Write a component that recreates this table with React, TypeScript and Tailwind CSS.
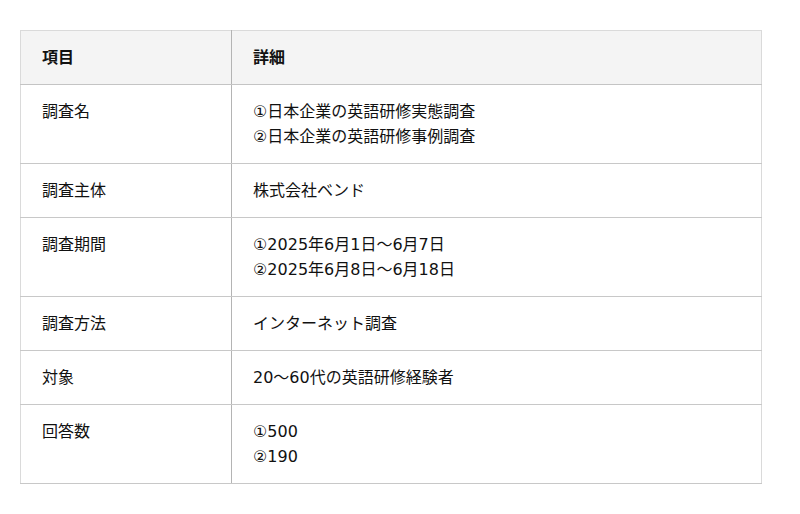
const rows: { label: string; lines: string[] }[] = [
  { label: "調査名", lines: ["①日本企業の英語研修実態調査", "②日本企業の英語研修事例調査"] },
  { label: "調査主体", lines: ["株式会社ベンド"] },
  { label: "調査期間", lines: ["①2025年6月1日～6月7日", "②2025年6月8日～6月18日"] },
  { label: "調査方法", lines: ["インターネット調査"] },
  { label: "対象", lines: ["20～60代の英語研修経験者"] },
  { label: "回答数", lines: ["①500", "②190"] },
];

export default function App() {
  return (
    <div className="min-h-screen bg-white px-5 pt-[30px] font-['DejaVu_Sans','Noto_Sans_CJK_JP',sans-serif] text-[16px] leading-[25px] text-[#111]">
      <table className="w-[742px] border-collapse border border-[#dadada]">
        <thead>
          <tr className="bg-[#f4f4f4]">
            <th className="w-[211px] border-r border-b border-r-[#b4b4b4] border-b-[#c4c4c4] px-[21px] py-[14px] text-left font-bold">項目</th>
            <th className="border-b border-[#c4c4c4] px-[21px] py-[14px] text-left font-bold">詳細</th>
          </tr>
        </thead>
        <tbody>
          {rows.map((r) => (
            <tr key={r.label}>
              <td className="border-r border-b border-r-[#b4b4b4] border-b-[#c8c8c8] px-[21px] py-[14px] align-top">{r.label}</td>
              <td className="border-b border-[#c8c8c8] px-[21px] py-[14px] align-top">
                {r.lines.map((l) => (
                  <div key={l}>{l}</div>
                ))}
              </td>
            </tr>
          ))}
        </tbody>
      </table>
    </div>
  );
}
